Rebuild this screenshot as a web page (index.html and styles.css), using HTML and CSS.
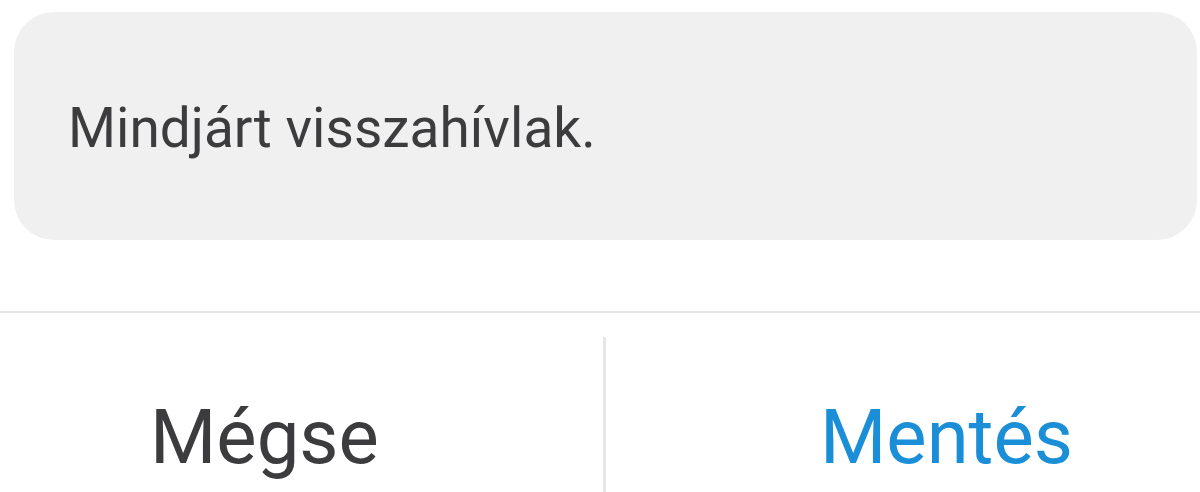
FILE: index.html
```html
<html>
<head>
<title>Visszahívás</title>
<link rel="stylesheet" href="styles.css">
</head>
<body>
<div class="dialog">
  <div class="message">
    <span class="message-text">Mindjárt visszahívlak.</span>
  </div>
  <div class="actions">
    <button class="action cancel">Mégse</button>
    <div class="separator"></div>
    <button class="action save">Mentés</button>
  </div>
</div>
</body>
</html>
```

FILE: styles.css
```css
body {
  font-family: Roboto, "Liberation Sans", Arial, sans-serif;
  margin: 0;
  background: #fff;
  color: #3c3c3e;
}
.dialog {
  width: 1200px;
}
.message {
  margin: 12px 3px 0 14px;
  padding: 89px 52px 84px 54px;
  background-color: #f0f0f0;
  border-radius: 40px;
}
.message-text {
  display: block;
  font-size: 55px;
  line-height: 55px;
}
.actions {
  display: flex;
  margin-top: 71px;
  border-top: 2px solid #e4e4e4;
  height: 179px;
}
.action {
  font-family: inherit;
  font-size: 76px;
  line-height: 76px;
  background: none;
  border: none;
  padding: 86px 0 0;
  text-align: left;
  align-self: flex-start;
  cursor: pointer;
}
.cancel {
  width: 603px;
  padding-left: 150px;
  color: #3c3c3e;
}
.separator {
  width: 3px;
  margin-top: 24px;
  background-color: #e6e6e6;
}
.save {
  flex: 1;
  padding-left: 214px;
  color: #1a8fd8;
}
```
